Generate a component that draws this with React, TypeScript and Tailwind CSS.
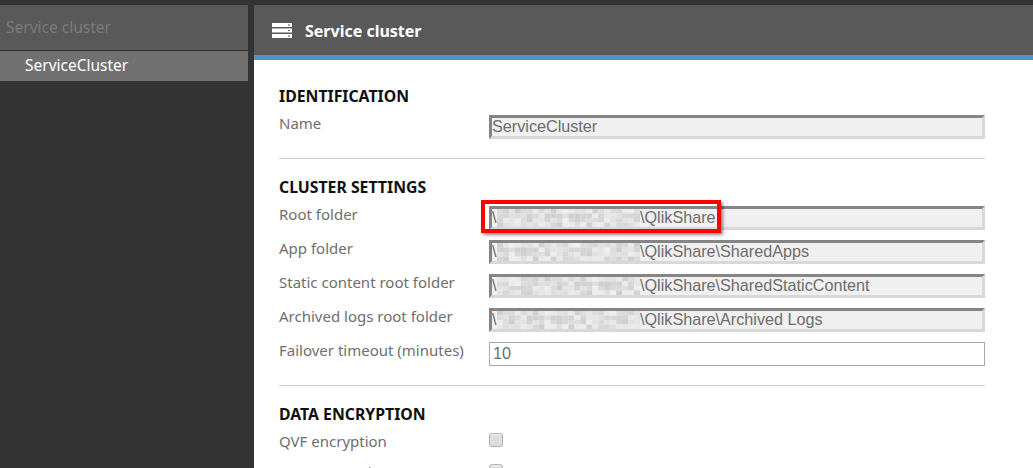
import React from 'react';

const uiFont = { fontFamily: '"Noto Sans", "Open Sans", sans-serif' };

// Pixelated blur that hides the server name in the path
const Mosaic: React.FC<{ seed: number }> = ({ seed }) => {
  const cells = [];
  let v = seed;
  for (let row = 0; row < 4; row++) {
    for (let col = 0; col < 24; col++) {
      v = (v * 73 + 41) % 101;
      const shade = 206 + (v % 34);
      cells.push(
        <rect key={`${row}-${col}`} x={col * 6} y={row * 6} width="6" height="6" fill={`rgb(${shade},${shade},${shade})`} />
      );
    }
  }
  return (
    <svg className="absolute left-[5px] top-[0px]" width="143" height="18" viewBox="0 0 144 24" preserveAspectRatio="none">
      {cells}
    </svg>
  );
};

const ReadonlyField: React.FC<{ value: string; seed?: number }> = ({ value, seed }) => (
  <div className="relative flex h-6 w-full items-center overflow-hidden border-[3px] border-t-[#858585] border-l-[#858585] border-r-[#d8d8d8] border-b-[#d8d8d8] bg-[#f0f0f0] pb-[1px] text-[16.2px] text-[#6d6d6d] font-['Liberation_Sans',sans-serif]">
    {seed !== undefined && <Mosaic seed={seed} />}
    <span className="absolute left-0 whitespace-pre">{seed !== undefined ? '\\' : ''}</span>
    <span className={seed !== undefined ? 'pl-[148px] whitespace-pre' : 'whitespace-pre'}>{value}</span>
  </div>
);

const Row: React.FC<{ label: string; children: React.ReactNode }> = ({ label, children }) => (
  <div className="flex h-[34px]">
    <div className="w-[210px] shrink-0 -mt-[2px] text-[15px] leading-5 text-[#6e6e6e]">{label}</div>
    <div className="flex-1">{children}</div>
  </div>
);

const Heading: React.FC<{ children: React.ReactNode }> = ({ children }) => (
  <h2 className="text-[15.800px] leading-5 font-bold text-[#111]">{children}</h2>
);

const CheckRow: React.FC<{ label: string }> = ({ label }) => (
  <div className="flex h-[31px]">
    <div className="w-[210px] shrink-0 -mt-[2px] text-[15px] leading-5 text-[#6e6e6e]">{label}</div>
    <div className="h-[14px] w-[14px] rounded-[3px] border border-[#b0b0b0] bg-[#dddddd] shadow-[inset_0_1px_1px_#f4f4f4]" />
  </div>
);

export default function App() {
  return (
    <div className="flex h-[468px] w-[1033px] gap-[6px] overflow-hidden bg-[#333333] pt-[5px]" style={uiFont}>
      <aside className="w-[248px] shrink-0">
        <div className="flex h-[46px] items-center border-b border-[#2e2e2e] bg-[#595959] pl-[6px] pt-[1px] text-[15.500px] text-[#7b7b7b]">
          Service cluster
        </div>
        <div className="flex h-[30px] items-center bg-[#717171] pl-[25px] text-[15.500px] text-white">ServiceCluster</div>
      </aside>

      <main className="relative flex-1 overflow-hidden bg-white">
        <header className="flex h-[50px] items-center gap-[13px] bg-[#595959] pl-[18px] pt-[1px] text-white">
          <svg width="20" height="15" viewBox="0 0 20 15">
            <path d="M0 0h20v4H0zM0 5.500h20v4H0zM0 11h20v4H0z" fill="#fff" />
            <path d="M16 1.500h2v1h-2zM16 7h2v1h-2zM16 12.500h2v1h-2z" fill="#595959" />
          </svg>
          <span className="text-base font-bold">Service cluster</span>
        </header>
        <div className="h-[5px] bg-[#5b8fc4]" />

        <div className="pl-[25px] pr-[48px] pt-[26px]">
          <Heading>IDENTIFICATION</Heading>
          <div className="mt-[9px]">
            <Row label="Name">
              <ReadonlyField value="ServiceCluster" />
            </Row>
          </div>
          <hr className="mt-[9px] border-t border-[#cccccc]" />

          <div className="mt-[18px]">
            <Heading>CLUSTER SETTINGS</Heading>
          </div>
          <div className="mt-[9px]">
            <Row label="Root folder">
              <ReadonlyField value="\QlikShare" seed={7} />
            </Row>
            <Row label="App folder">
              <ReadonlyField value="\QlikShare\SharedApps" seed={23} />
            </Row>
            <Row label="Static content root folder">
              <ReadonlyField value="\QlikShare\SharedStaticContent" seed={51} />
            </Row>
            <Row label="Archived logs root folder">
              <ReadonlyField value="\QlikShare\Archived Logs" seed={88} />
            </Row>
            <Row label="Failover timeout (minutes)">
              <div className="flex h-6 items-center border border-[#a9a9a9] bg-white pl-[3px] pb-[1px] text-[16.2px] text-[#6d6d6d] font-['Liberation_Sans',sans-serif]">10</div>
            </Row>
          </div>
          <hr className="mt-[9px] border-t border-[#cccccc]" />

          <div className="mt-[18px]">
            <Heading>DATA ENCRYPTION</Heading>
          </div>
          <div className="mt-[9px]">
            <CheckRow label="QVF encryption" />
            <CheckRow label="QVD encryption" />
          </div>
        </div>

        {/* annotation drawn over the screenshot */}
        <div className="absolute left-[227px] top-[195px] h-[33px] w-[240px] border-[4px] border-[#ff0000] shadow-[2px_2px_3px_rgba(0,0,0,0.45)]" />
      </main>
    </div>
  );
}
